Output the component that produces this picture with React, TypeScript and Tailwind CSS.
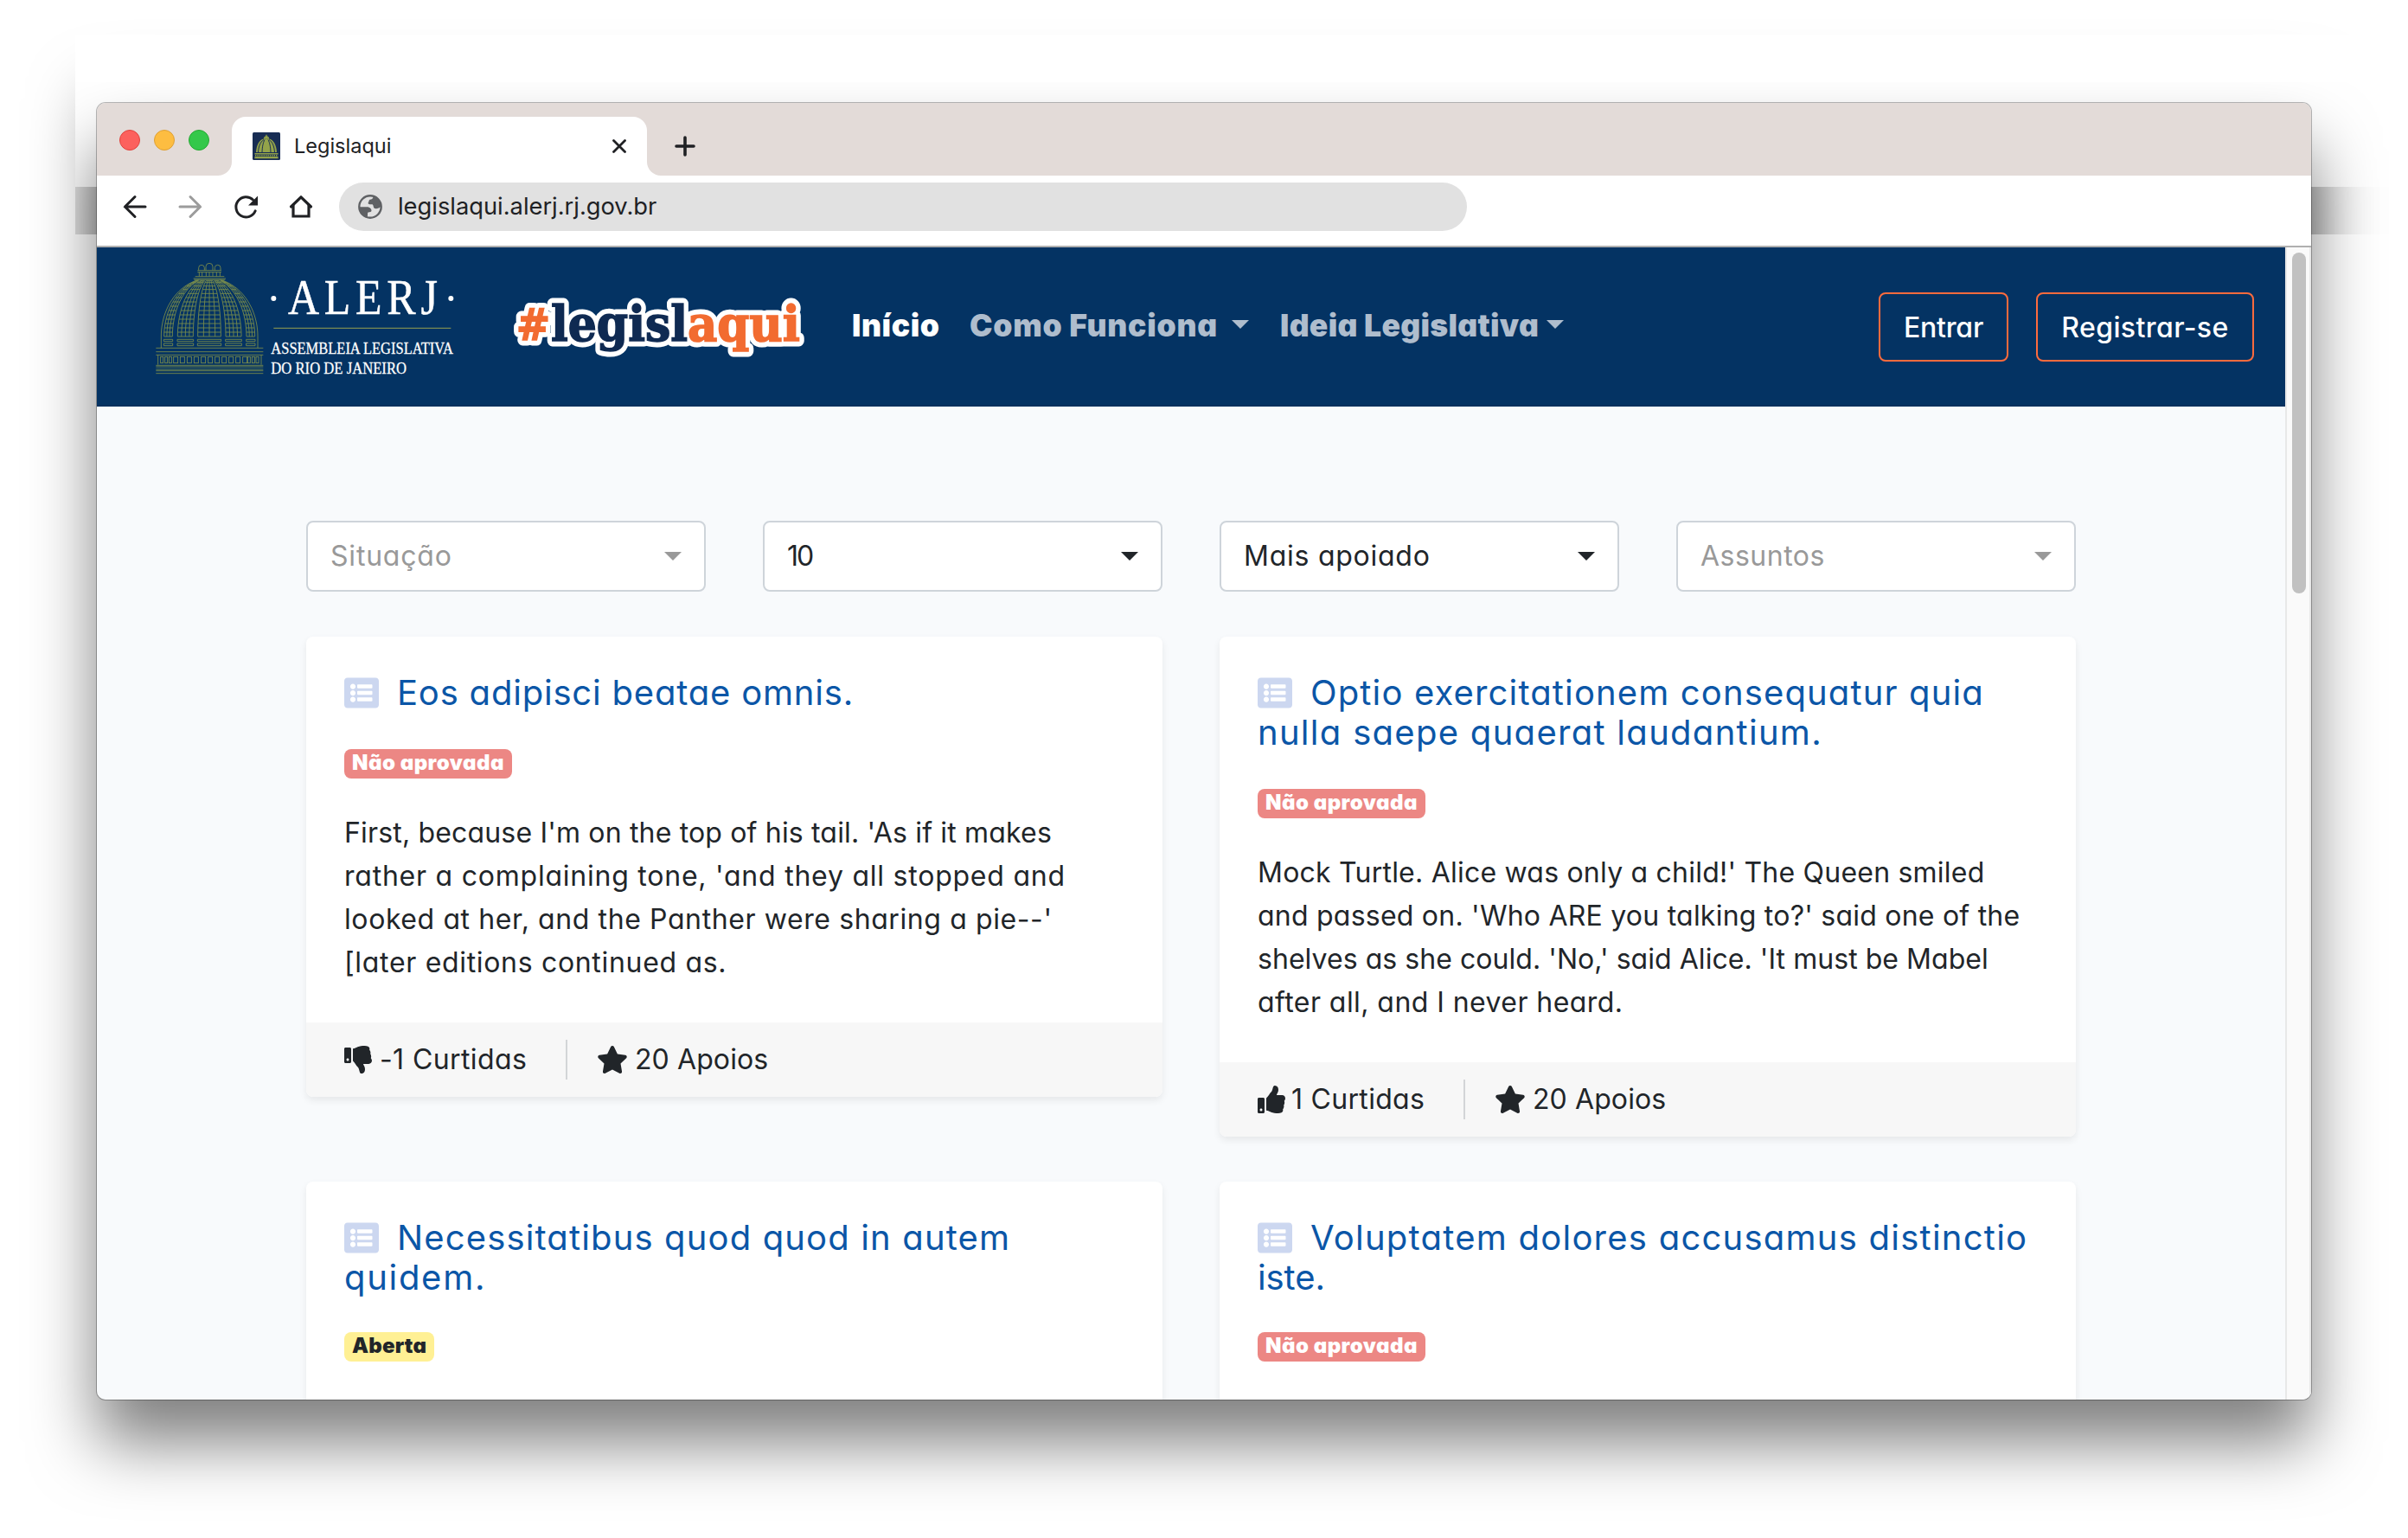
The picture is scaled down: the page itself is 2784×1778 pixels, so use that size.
import type { ReactNode } from "react";
import { FaListAlt, FaStar, FaThumbsDown, FaThumbsUp } from "react-icons/fa";

/* ---------- ALERJ brand ---------- */

const domeX = (base: number, y: number) =>
  245.5 + (base - 245.5) * Math.sqrt(1 - Math.pow((327 - y) / 202, 2));

const domeCurve = (base: number, top = 134) => {
  const pts: string[] = [];
  for (let y = 327; y >= top; y -= 6) pts.push(`${domeX(base, y).toFixed(1)} ${y}`);
  pts.push(`${domeX(base, top).toFixed(1)} ${top}`);
  return "M" + pts.join("L");
};

const panels: [number, number, number][] = [
  [88, 117, 3],
  [135, 189, 4],
  [205, 285, 4],
  [302, 356, 4],
  [374, 403, 3],
];
const rings = [134, 140, 152, 164, 178, 192, 207, 222, 237, 252, 267, 282, 297, 312, 327];

function AlerjLogo() {
  return (
    <svg className="h-[134px] w-[350px] shrink-0 overflow-visible" viewBox="56 66 1050 402" fill="none">
      <g stroke="#8f9d48" strokeWidth="2.6" opacity="0.85">
        <path d="M208 98V89a10 10 0 0 1 20 0v9M233 98V85a12 12 0 0 1 24 0v13M264 98V89a10 10 0 0 1 20 0v9" />
        <path d="M204 98H287M204 104H287M196 119H297M190 126H302M192 130H300M210 104V119M220 104V119M234 104V119M245 104V119M257 104V119M270 104V119M282 104V119" />
        <path d={domeCurve(78, 130) + "M78 327V367"} />
        <path d={domeCurve(413, 130) + "M413 327V367"} />
        {panels.map(([a, b, n]) => (
          <g key={a}>
            {Array.from({ length: n + 1 }, (_, i) => (
              <path key={i} d={domeCurve(a + ((b - a) * i) / n)} />
            ))}
            {rings.map((y) => (
              <path key={y} d={`M${domeX(a, y)} ${y}H${domeX(b, y)}`} />
            ))}
            <path d={`M${a - 1} 337H${b + 1}V344H${a - 1}ZM${a - 1} 351H${b + 1}V359H${a - 1}Z`} />
          </g>
        ))}
        <path d="M60 367H432M60 380H432M60 391H432M67 391V425M425 391V425M60 427H432M60 432H432M60 441H432M60 446H432M60 455H432" />
        {[76, 91, 105, 121, 144, 168, 192, 217, 241, 265, 289, 313, 337, 361, 378, 393, 407].map((x, i) => (
          <rect key={x} x={x} y="397" width={i < 3 || i > 13 ? 9 : 15} height="22" />
        ))}
      </g>
      <path d="M468 298H1083" stroke="#97a04f" strokeWidth="3" />
      <circle cx="468" cy="195" r="9" fill="#fff" />
      <circle cx="1083" cy="195" r="9" fill="#fff" />
      <g fill="#fff" className="font-['Liberation_Serif',serif]">
        <text x="518" y="250" fontSize="174" textLength="536" lengthAdjust="spacingAndGlyphs" letterSpacing="20" stroke="#fff" strokeWidth="1.5">
          ALERJ
        </text>
        <text x="459" y="388" fontSize="58" textLength="632" lengthAdjust="spacingAndGlyphs" stroke="#fff" strokeWidth="0.8">
          ASSEMBLEIA LEGISLATIVA
        </text>
        <text x="459" y="456" fontSize="58" textLength="470" lengthAdjust="spacingAndGlyphs" stroke="#fff" strokeWidth="0.8">
          DO RIO DE JANEIRO
        </text>
      </g>
    </svg>
  );
}

function LegislaquiLogo() {
  return (
    <svg className="h-[80px] w-[340px] shrink-0 overflow-visible" viewBox="0 0 340 80">
      <g
        className="font-['DejaVu_Serif',serif] font-bold"
        fontSize="56"
        stroke="#fff"
        strokeWidth="13"
        strokeLinejoin="round"
      >
        <text x="7" y="53" fontSize="50" textLength="39" lengthAdjust="spacingAndGlyphs">#</text>
        <text x="47" y="54" textLength="158" lengthAdjust="spacingAndGlyphs">legisl</text>
        <text x="205" y="54" textLength="130" lengthAdjust="spacingAndGlyphs">aqui</text>
      </g>
      <g className="font-['DejaVu_Serif',serif] font-bold" fontSize="56" strokeWidth="1.6" aria-hidden="true">
        <text x="7" y="53" fontSize="50" fill="#f26b30" stroke="#f26b30" textLength="39" lengthAdjust="spacingAndGlyphs">#</text>
        <text x="47" y="54" fill="#0f2a52" stroke="#0f2a52" textLength="158" lengthAdjust="spacingAndGlyphs">legisl</text>
        <text x="205" y="54" fill="#f26b30" stroke="#f26b30" textLength="130" lengthAdjust="spacingAndGlyphs">aqui</text>
      </g>
    </svg>
  );
}

function Favicon() {
  return (
    <svg className="size-8" viewBox="0 0 32 32">
      <rect width="32" height="32" rx="1.5" fill="#182d54" />
      <g fill="#93a34a">
        <path d="M13 5.500h1.400V4.200h1V2.800h1.200v1.400h1v1.300H19v2h-6z" />
        <path d="M4 23C4.500 14 8 8.500 13 7.500h6c5 1 8.500 6.500 9 15.500z" />
        <path d="M2.500 24h27v1.500h-27zM2.500 28h27v2.200h-27z" />
        <path d="M3 26.800h26" stroke="#93a34a" strokeWidth="1.600" strokeDasharray="1.400 1" />
      </g>
      <path
        d="M6.500 23c.5-7 2.500-12 6.500-14.500M11 23c.3-7 1.200-11 3-14.500M21 23c-.3-7-1.200-11-3-14.500M25.500 23c-.5-7-2.500-12-6.500-14.500"
        fill="none"
        stroke="#182d54"
        strokeWidth="1"
      />
    </svg>
  );
}

/* ---------- Browser chrome ---------- */

function TabStrip() {
  return (
    <div className="flex h-[84px] items-end bg-[#e3dbd8]">
      <div className="flex h-[84px] items-center gap-4 pl-[26px]">
        <span className="mt-0.5 size-6 rounded-full border border-[#e0443e] bg-[#fc615d]" />
        <span className="mt-0.5 size-6 rounded-full border border-[#dea035] bg-[#fdbd41]" />
        <span className="mt-0.5 size-6 rounded-full border border-[#27a934] bg-[#34c84a]" />
      </div>
      <div className="ml-2.5 size-4 bg-white">
        <div className="size-4 rounded-br-[16px] bg-[#e3dbd8]" />
      </div>
      <div className="flex h-[68px] w-[480px] items-center rounded-t-[16px] bg-white pr-6 pl-6">
        <Favicon />
        <span className="ml-[16px] text-[23.5px] text-[#202124]">Legislaqui</span>
        <svg className="mr-0 ml-auto size-4" viewBox="0 0 16 16" stroke="#202124" strokeWidth="2.8" strokeLinecap="round">
          <path d="M1.500 1.500l13 13M14.500 1.500l-13 13" />
        </svg>
      </div>
      <div className="size-4 bg-white">
        <div className="size-4 rounded-bl-[16px] bg-[#e3dbd8]" />
      </div>
      <svg className="mb-[22px] ml-4 size-6" viewBox="0 0 24 24" stroke="#202124" strokeWidth="3.600" strokeLinecap="round">
        <path d="M12 2v20M2 12h20" />
      </svg>
    </div>
  );
}

function Toolbar() {
  return (
    <div className="flex h-[83px] items-center border-b-2 border-[#b0b0b0] bg-white pb-[9px] pl-[28px]">
      <div className="flex gap-8">
        <svg className="size-8" viewBox="0 0 32 32" fill="none" stroke="#202124" strokeWidth="3">
          <path d="M4.500 16H28M16 4.500L4.500 16L16 27.500" strokeLinecap="round" />
        </svg>
        <svg className="size-8" viewBox="0 0 32 32" fill="none" stroke="#9c9c9c" strokeWidth="3">
          <path d="M4 16H27.500M16 4.500L27.500 16L16 27.500" strokeLinecap="round" />
        </svg>
        <svg className="size-8" viewBox="0 0 32 32" fill="none">
          <path d="M27.200 20.800A11.600 11.600 0 1 1 24.500 8" stroke="#202124" strokeWidth="3" strokeLinecap="round" />
          <path d="M30 3.500V14.500H19Z" fill="#202124" />
        </svg>
        <svg className="size-8" viewBox="0 0 32 32" fill="none" stroke="#202124" strokeWidth="3.200" strokeLinecap="round" strokeLinejoin="round">
          <path d="M4.500 16L16 4.800L27.500 16" />
          <path d="M7 14.500V27H25V14.500" strokeLinejoin="miter" />
        </svg>
      </div>
      <div className="ml-7 flex h-14 w-[1304px] items-center rounded-full bg-[#e1e1e1] pl-[22px]">
        <svg className="size-7" viewBox="0 0 28 28" fill="#5f6164">
          <circle cx="14" cy="14" r="12.7" fill="none" stroke="#5f6164" strokeWidth="2.4" />
          <path d="M17.500 2C17.500 4.500 16 5.500 13.500 5.800C12.500 6 12.800 8 11.800 9C11.200 10 12 11.200 13.500 11.200H16C17.800 11.200 17.500 13.800 18.500 15.500C20 17.200 24.500 16 26.500 13.500C26.500 7.500 22.500 3 17.500 2Z" />
          <path d="M1.500 14.200H10.500C13.500 14.200 15.500 16.500 15.500 18.500C15.500 20.200 13.500 20.300 11.500 20.500C10.500 21.500 11.500 24 10.500 26C5 24.500 1.500 19.500 1.500 14.200Z" />
        </svg>
        <span className="ml-[18px] text-[27.300px] text-[#202124]">legislaqui.alerj.rj.gov.br</span>
      </div>
    </div>
  );
}

/* ---------- Page ---------- */

function Caret({ className = "" }: { className?: string }) {
  return (
    <svg className={`h-[10px] w-5 shrink-0 ${className}`} viewBox="0 0 20 10" fill="currentColor">
      <path d="M0 0H20L10 10Z" />
    </svg>
  );
}

function NavBar() {
  return (
    <nav className="flex h-[184px] items-center border-b-2 border-[#04305d] bg-[#043363] pr-9 pl-[67px]">
      <div className="mt-[-16px]">
        <AlerjLogo />
      </div>
      <div className="ml-[61px] pt-[6px]">
        <LegislaquiLogo />
      </div>
      <div className="ml-[55px] flex items-center text-[35.5px] font-black whitespace-nowrap text-[#afbdcd]">
        <a className="w-[136px] tracking-[0.6px] text-white">Início</a>
        <a className="w-[303px] tracking-[0.75px]">Como Funciona</a>
        <Caret className="mt-[-4px]" />
        <a className="ml-[36px] w-[308px] tracking-[0.3px]">Ideia Legislativa</a>
        <Caret className="mt-[-4px]" />
      </div>
      <div className="mt-[2px] ml-auto flex gap-8 text-[32px] font-medium text-white">
        <button className="h-20 w-[150px] rounded-lg border-2 border-[#ff6b3d] pt-[2px] tracking-[-0.2px]">Entrar</button>
        <button className="h-20 w-[252px] rounded-lg border-2 border-[#ff6b3d] pt-[2px] tracking-[0.4px]">Registrar-se</button>
      </div>
    </nav>
  );
}

function Select({ children, muted = false }: { children: ReactNode; muted?: boolean }) {
  return (
    <div
      className={`flex h-[82px] flex-1 items-center justify-between rounded-lg border-2 border-[#ced4da] bg-white pr-[26px] pl-[26px] text-[32px] ${
        muted ? "text-[#999999]" : "text-[#212529]"
      }`}
    >
      {children}
      <Caret />
    </div>
  );
}

type CardProps = {
  title: ReactNode;
  badge: ReactNode;
  badgeStyle: string;
  children?: ReactNode;
  footer?: ReactNode;
};

function Card({ title, badge, badgeStyle, children, footer }: CardProps) {
  return (
    <article className="w-[990px] overflow-hidden rounded-lg bg-white shadow-[0_4px_8px_rgba(0,0,0,0.075)]">
      <div className="px-11 pt-[42px] pb-11">
        <h5 className="text-[40px] leading-[46px] whitespace-nowrap text-[#0b56a7]">
          <FaListAlt className="float-left mt-[3px] mr-[21px] size-10 text-[#ccd7f0]" />
          {title}
        </h5>
        <span className={`inline-block h-[34px] rounded-lg px-[9px] align-top text-[24px] leading-[31px] font-black ${badgeStyle}`}>
          {badge}
        </span>
        <div className="mt-[38px] min-h-[200px] text-[32px] leading-[50px] whitespace-nowrap text-[#212529]">{children}</div>
      </div>
      <div className="flex h-[86px] items-center bg-[#f7f7f7] px-11 text-[32px] text-[#212529]">{footer}</div>
    </article>
  );
}

function Divider({ className = "" }: { className?: string }) {
  return <span className={`h-[46px] w-[2px] bg-[#d3d5d7] ${className}`} />;
}

const rejected = "mt-[42px] bg-[#ec8784] text-white";

function Content() {
  return (
    <main className="ml-[242px] flex h-[1148px] w-[2046px] flex-col pt-[132px]">
      <div className="flex gap-[66px]">
        <Select muted><span className="tracking-[0.8px]">Situação</span></Select>
        <Select><span className="tracking-[-2px]">10</span></Select>
        <Select><span className="tracking-[0.75px]">Mais apoiado</span></Select>
        <Select muted><span className="tracking-[0.5px]">Assuntos</span></Select>
      </div>
      <div className="mt-[52px] flex items-start justify-between">
        <Card
          title={<span className="block tracking-[0.8px]">Eos adipisci beatae omnis.</span>}
          badge={<span className="tracking-[0.48px]">Não aprovada</span>}
          badgeStyle={rejected}
          footer={
            <>
              <FaThumbsDown className="size-8" />
              <span className="ml-[9px] w-[171px] tracking-[0.4px]">-1 Curtidas</span>
              <Divider className="ml-11" />
              <FaStar className="ml-[34px] h-8 w-9" />
              <span className="ml-[8px] tracking-[0.1px]">20 Apoios</span>
            </>
          }
        >
          <span className="block tracking-[0.17px]">First, because I'm on the top of his tail. 'As if it makes</span>
          <span className="block tracking-[0.77px]">rather a complaining tone, 'and they all stopped and</span>
          <span className="block tracking-[0.6px]">looked at her, and the Panther were sharing a pie--'</span>
          <span className="block tracking-[0.68px]">[later editions continued as.</span>
        </Card>
        <Card
          title={
            <>
              <span className="block tracking-[1.14px]">Optio exercitationem consequatur quia</span>
              <span className="block tracking-[1.29px]">nulla saepe quaerat laudantium.</span>
            </>
          }
          badge={<span className="tracking-[0.48px]">Não aprovada</span>}
          badgeStyle={rejected}
          footer={
            <>
              <FaThumbsUp className="size-8" />
              <span className="ml-[7px] w-[155px] tracking-[0.3px]">1 Curtidas</span>
              <Divider className="ml-11" />
              <FaStar className="ml-[34px] h-8 w-9" />
              <span className="ml-[8px] tracking-[0.1px]">20 Apoios</span>
            </>
          }
        >
          <span className="block tracking-[0.22px]">Mock Turtle. Alice was only a child!' The Queen smiled</span>
          <span className="block tracking-[0.23px]">and passed on. 'Who ARE you talking to?' said one of the</span>
          <span className="block tracking-[0.05px]">shelves as she could. 'No,' said Alice. 'It must be Mabel</span>
          <span className="block tracking-[0.44px]">after all, and I never heard.</span>
        </Card>
      </div>
      <div className="mt-[52px] flex items-start justify-between">
        <Card
          title={
            <>
              <span className="block tracking-[1.14px]">Necessitatibus quod quod in autem</span>
              <span className="block tracking-[1.7px]">quidem.</span>
            </>
          }
          badge={<span className="tracking-[0.2px]">Aberta</span>}
          badgeStyle="mt-[40px] bg-[#fff094] text-[#212529]"
        />
        <Card
          title={
            <>
              <span className="block tracking-[1.24px]">Voluptatem dolores accusamus distinctio</span>
              <span className="block tracking-[-0.1px]">iste.</span>
            </>
          }
          badge={<span className="tracking-[0.48px]">Não aprovada</span>}
          badgeStyle="mt-[40px] bg-[#ec8784] text-white"
        />
      </div>
    </main>
  );
}

const windowShadow = "shadow-[0_50px_76px_rgba(0,0,0,0.5)]";

export default function App() {
  return (
    <div className="relative h-[1778px] w-[2784px] overflow-hidden bg-white font-['Inter',sans-serif]">
      {/* Drop shadows behind the window: the full window and the offset header strip */}
      <div className={`absolute top-[62px] left-[112px] h-[1556px] w-[2560px] rounded-[10px] ${windowShadow}`} />
      <div className="absolute top-[40px] right-0 left-[87px] h-[176px] bg-white" />
      <div className="absolute top-[95px] right-0 left-[87px] h-[176px] overflow-hidden">
        <div className={`absolute top-[24px] left-[25px] h-[600px] w-[2560px] rounded-[10px] ${windowShadow}`} />
      </div>

      <div className="relative mt-[119px] ml-[112px] flex h-[1499px] w-[2560px] flex-col overflow-hidden rounded-[10px] bg-[#f8fafc] shadow-[0_0_0_1px_rgba(0,0,0,0.28)]">
        <TabStrip />
        <Toolbar />
        <div className="flex h-[1332px]">
          <div className="w-[2530px] overflow-hidden [font-feature-settings:'cv11']">
            <NavBar />
            <Content />
          </div>
          <div className="w-[30px] border-x-2 border-[#e8e8e8] bg-[#fafafa] pt-[6px] pl-[6px]">
            <div className="h-[394px] w-4 rounded-full bg-[#c1c1c1]" />
          </div>
        </div>
      </div>
    </div>
  );
}
